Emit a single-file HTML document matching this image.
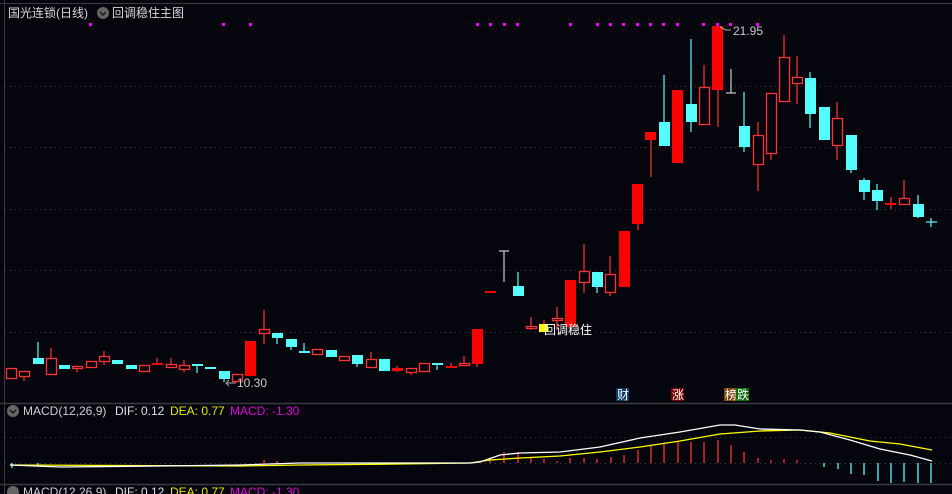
<!DOCTYPE html>
<html><head><meta charset="utf-8"><style>
html,body{margin:0;padding:0;background:#05050d;width:952px;height:494px;overflow:hidden}
svg{display:block}
text{font-family:"Liberation Sans","Noto Sans CJK SC",sans-serif;font-size:12px}
</style></head><body>
<svg width="952" height="494" viewBox="0 0 952 494" xmlns="http://www.w3.org/2000/svg">
<rect width="952" height="494" fill="#05050d"/>
<line x1="0" y1="3.5" x2="952" y2="3.5" stroke="#3a3a40"/>
<line x1="4.5" y1="0" x2="4.5" y2="494" stroke="#3a3a40"/>
<g stroke="#3a3a3a" stroke-dasharray="1,4">
<line x1="5" y1="86.5" x2="952" y2="86.5"/><line x1="5" y1="147.5" x2="952" y2="147.5"/>
<line x1="5" y1="209.5" x2="952" y2="209.5"/><line x1="5" y1="270.5" x2="952" y2="270.5"/>
<line x1="5" y1="332.5" x2="952" y2="332.5"/>
<line x1="5" y1="437.5" x2="952" y2="437.5"/><line x1="5" y1="463.5" x2="952" y2="463.5"/>
</g>
<line x1="0" y1="403.5" x2="952" y2="403.5" stroke="#3a3a40" stroke-width="1.5"/>
<line x1="0" y1="484.5" x2="952" y2="484.5" stroke="#3a3a40" stroke-width="1.5"/>
<text x="8" y="17" fill="#d8d8d8">国光连锁(日线)</text>
<circle cx="103" cy="13" r="6" fill="#666"/><path d="M100 12l3 3 3-3" stroke="#111" fill="none" stroke-width="1.3"/>
<text x="112" y="17" fill="#d8d8d8">回调稳住主图</text>
<g fill="#ff00ff">
<rect x="89" y="23" width="3" height="3"/><rect x="222" y="23" width="3" height="3"/><rect x="249" y="23" width="3" height="3"/>
<rect x="476" y="23" width="3" height="3"/><rect x="489" y="23" width="3" height="3"/><rect x="503" y="23" width="3" height="3"/><rect x="516" y="23" width="3" height="3"/>
<rect x="569" y="23" width="3" height="3"/><rect x="596" y="23" width="3" height="3"/><rect x="609" y="23" width="3" height="3"/><rect x="622" y="23" width="3" height="3"/>
<rect x="636" y="23" width="3" height="3"/><rect x="649" y="23" width="3" height="3"/><rect x="662" y="23" width="3" height="3"/><rect x="676" y="23" width="3" height="3"/>
<rect x="702" y="23" width="3" height="3"/><rect x="716" y="23" width="3" height="3"/><rect x="729" y="23" width="3" height="3"/><rect x="756" y="23" width="3" height="3"/>
</g>
<!-- wicks -->
<g stroke-width="1.2">
<g stroke="#ff3333">
<line x1="24" y1="371" x2="24" y2="381"/><line x1="51" y1="348" x2="51" y2="374"/><line x1="77" y1="366" x2="77" y2="372"/>
<line x1="104" y1="351" x2="104" y2="365"/><line x1="157" y1="358" x2="157" y2="365"/><line x1="171" y1="358" x2="171" y2="367"/>
<line x1="184" y1="360" x2="184" y2="372"/><line x1="264" y1="310" x2="264" y2="344"/><line x1="371" y1="352" x2="371" y2="367"/>
<line x1="397" y1="366" x2="397" y2="372"/><line x1="411" y1="368" x2="411" y2="375"/><line x1="451" y1="363" x2="451" y2="367"/>
<line x1="464" y1="356" x2="464" y2="365"/><line x1="477" y1="329" x2="477" y2="367"/><line x1="531" y1="317" x2="531" y2="330"/>
<line x1="544" y1="320" x2="544" y2="326"/><line x1="557" y1="307" x2="557" y2="330"/><line x1="584" y1="244" x2="584" y2="293"/>
<line x1="610" y1="256" x2="610" y2="296"/><line x1="638" y1="184" x2="638" y2="230"/><line x1="651" y1="132" x2="651" y2="177"/>
<line x1="704" y1="65" x2="704" y2="124"/><line x1="718" y1="26" x2="718" y2="127"/><line x1="758" y1="122" x2="758" y2="191"/>
<line x1="771" y1="93" x2="771" y2="160"/><line x1="784" y1="35" x2="784" y2="101"/><line x1="797" y1="56" x2="797" y2="104"/>
<line x1="837" y1="102" x2="837" y2="160"/><line x1="891" y1="197" x2="891" y2="209"/><line x1="904" y1="180" x2="904" y2="204"/>
</g>
<g stroke="#55ffff">
<line x1="38" y1="342" x2="38" y2="364"/><line x1="197" y1="365" x2="197" y2="373"/><line x1="224" y1="371" x2="224" y2="382"/>
<line x1="277" y1="333" x2="277" y2="344"/><line x1="291" y1="339" x2="291" y2="350"/><line x1="304" y1="343" x2="304" y2="353"/>
<line x1="357" y1="355" x2="357" y2="367"/><line x1="437" y1="363" x2="437" y2="370"/><line x1="518" y1="272" x2="518" y2="296"/>
<line x1="597" y1="272" x2="597" y2="293"/><line x1="664" y1="75" x2="664" y2="146"/><line x1="691" y1="39" x2="691" y2="132"/>
<line x1="744" y1="92" x2="744" y2="152"/><line x1="810" y1="72" x2="810" y2="128"/><line x1="851" y1="135" x2="851" y2="173"/>
<line x1="864" y1="178" x2="864" y2="200"/><line x1="877" y1="184" x2="877" y2="210"/><line x1="918" y1="195" x2="918" y2="218"/>
<line x1="931" y1="218" x2="931" y2="227"/><line x1="926" y1="222" x2="937" y2="222"/>
</g>
<g stroke="#cccccc">
<line x1="504" y1="251" x2="504" y2="282"/><line x1="499" y1="251" x2="509" y2="251"/>
<line x1="731" y1="69" x2="731" y2="93"/><line x1="726" y1="93" x2="736" y2="93"/>
</g>
</g>
<!-- hollow red -->
<g fill="#05050d" stroke="#ff3333" stroke-width="1.3">
<rect x="6.5" y="368.5" width="10" height="10"/><rect x="19.5" y="371.5" width="10" height="5"/><rect x="46.5" y="358.5" width="10" height="16"/>
<rect x="72.5" y="366.5" width="10" height="2"/><rect x="86.5" y="361.5" width="10" height="6"/><rect x="99.5" y="356.5" width="10" height="5"/>
<rect x="139.5" y="365.5" width="10" height="6"/><rect x="166.5" y="364.5" width="10" height="3"/><rect x="179.5" y="365.5" width="10" height="4"/>
<rect x="232.5" y="374.5" width="10" height="7"/><rect x="259.5" y="329.5" width="10" height="4"/><rect x="312.5" y="349.5" width="10" height="5"/>
<rect x="339.5" y="356.5" width="10" height="4"/><rect x="366.5" y="359.5" width="10" height="8"/><rect x="406.5" y="368.5" width="10" height="4"/>
<rect x="419.5" y="363.5" width="10" height="8"/><rect x="459.5" y="363.5" width="10" height="2"/><rect x="526.5" y="326.5" width="10" height="2"/>
<rect x="552.5" y="318.5" width="10" height="2"/><rect x="579.5" y="271.5" width="10" height="11"/><rect x="605.5" y="274.5" width="10" height="18"/>
<rect x="699.5" y="87.5" width="10" height="37"/><rect x="753.5" y="135.5" width="10" height="29"/><rect x="766.5" y="93.5" width="10" height="60"/>
<rect x="779.5" y="57.5" width="10" height="44"/><rect x="792.5" y="77.5" width="10" height="6"/><rect x="832.5" y="118.5" width="10" height="27"/>
<rect x="899.5" y="198.5" width="10" height="6"/>
</g>
<!-- filled red -->
<g fill="#ff0000">
<rect x="392" y="368" width="11" height="3"/><rect x="446" y="366" width="11" height="2"/><rect x="472" y="329" width="11" height="35"/>
<rect x="485" y="291" width="11" height="2"/><rect x="245" y="341" width="11" height="35"/><rect x="152" y="363" width="11" height="2"/>
<rect x="565" y="280" width="11" height="47"/><rect x="619" y="231" width="11" height="56"/><rect x="632" y="184" width="11" height="40"/>
<rect x="645" y="132" width="11" height="8"/><rect x="672" y="90" width="11" height="73"/><rect x="712" y="26" width="11" height="64"/>
<rect x="885" y="203" width="11" height="2"/>
</g>
<rect x="539" y="324" width="9" height="8" fill="#ffff00"/>
<!-- cyan filled -->
<g fill="#55ffff">
<rect x="33" y="358" width="11" height="6"/><rect x="59" y="365" width="11" height="4"/><rect x="112" y="360" width="11" height="4"/>
<rect x="126" y="365" width="11" height="4"/><rect x="192" y="364" width="11" height="2"/><rect x="205" y="367" width="11" height="2"/>
<rect x="219" y="371" width="11" height="8"/><rect x="272" y="333" width="11" height="5"/><rect x="286" y="339" width="11" height="8"/>
<rect x="299" y="351" width="11" height="2"/><rect x="326" y="350" width="11" height="7"/><rect x="352" y="355" width="11" height="9"/>
<rect x="379" y="359" width="11" height="12"/><rect x="432" y="363" width="11" height="2"/><rect x="513" y="286" width="11" height="10"/>
<rect x="592" y="272" width="11" height="15"/><rect x="659" y="122" width="11" height="24"/><rect x="686" y="104" width="11" height="18"/>
<rect x="739" y="126" width="11" height="21"/><rect x="805" y="78" width="11" height="36"/><rect x="819" y="107" width="11" height="33"/>
<rect x="846" y="135" width="11" height="35"/><rect x="859" y="180" width="11" height="12"/><rect x="872" y="190" width="11" height="11"/>
<rect x="913" y="204" width="11" height="13"/>
</g>
<text x="544" y="334" fill="#ffffff">回调稳住</text>
<path d="M236 383h-10m3-3l-3 3 3 3" stroke="#aaa" fill="none"/>
<text x="237" y="387" fill="#c8c8c8">10.30</text>
<path d="M720 27l6 3h5" stroke="#aaa" fill="none"/>
<text x="733" y="35" fill="#c8c8c8">21.95</text>
<rect x="616" y="388" width="13" height="13" fill="#0a3a66"/><text x="617" y="399" fill="#fff">财</text>
<rect x="671" y="388" width="13" height="13" fill="#7a0000"/><text x="672" y="399" fill="#fff">涨</text>
<rect x="724" y="388" width="13" height="13" fill="#7a4a10"/><text x="725" y="399" fill="#fff">榜</text>
<rect x="736" y="388" width="13" height="13" fill="#0a6a0a"/><text x="737" y="399" fill="#fff">跌</text>
<!-- MACD header -->
<circle cx="13" cy="411" r="6" fill="#666"/><path d="M10 410l3 3 3-3" stroke="#111" fill="none" stroke-width="1.3"/>
<text x="23" y="415" fill="#d0d0d0">MACD(12,26,9)</text><text x="115" y="415" fill="#e0e0e0">DIF: 0.12</text>
<text x="170" y="415" fill="#e6e600">DEA: 0.77</text><text x="230" y="415" fill="#e000e0">MACD: -1.30</text>
<circle cx="13" cy="492" r="6" fill="#666"/>
<text x="23" y="496" fill="#d0d0d0">MACD(12,26,9)</text><text x="115" y="496" fill="#e0e0e0">DIF: 0.12</text>
<text x="170" y="496" fill="#e6e600">DEA: 0.77</text><text x="230" y="496" fill="#e000e0">MACD: -1.30</text>
<!-- MACD bars -->
<g stroke-width="1.3">
<g stroke="#ff3333">
<line x1="264" y1="463" x2="264" y2="460"/><line x1="277" y1="463" x2="277" y2="461"/><line x1="490" y1="463" x2="490" y2="459"/>
<line x1="504" y1="463" x2="504" y2="452"/><line x1="518" y1="463" x2="518" y2="452"/><line x1="531" y1="463" x2="531" y2="458"/>
<line x1="544" y1="463" x2="544" y2="459"/><line x1="557" y1="463" x2="557" y2="461"/><line x1="570" y1="463" x2="570" y2="458"/>
<line x1="584" y1="463" x2="584" y2="458"/><line x1="597" y1="463" x2="597" y2="459"/><line x1="611" y1="463" x2="611" y2="457"/>
<line x1="624" y1="463" x2="624" y2="455"/><line x1="638" y1="463" x2="638" y2="450"/><line x1="651" y1="463" x2="651" y2="445"/>
<line x1="664" y1="463" x2="664" y2="444"/><line x1="678" y1="463" x2="678" y2="441"/><line x1="691" y1="463" x2="691" y2="442"/>
<line x1="704" y1="463" x2="704" y2="442"/><line x1="718" y1="463" x2="718" y2="440"/><line x1="731" y1="463" x2="731" y2="445"/>
<line x1="744" y1="463" x2="744" y2="452"/><line x1="758" y1="463" x2="758" y2="458"/><line x1="771" y1="463" x2="771" y2="460"/>
<line x1="784" y1="463" x2="784" y2="459"/><line x1="797" y1="463" x2="797" y2="460"/>
</g>
<g stroke="#55ffff">
<line x1="38" y1="463" x2="38" y2="466"/><line x1="12" y1="463" x2="12" y2="468"/><line x1="824" y1="463" x2="824" y2="467"/><line x1="838" y1="463" x2="838" y2="469"/>
<line x1="851" y1="463" x2="851" y2="474"/><line x1="864" y1="463" x2="864" y2="475"/><line x1="878" y1="463" x2="878" y2="481"/>
<line x1="891" y1="463" x2="891" y2="483"/><line x1="904" y1="463" x2="904" y2="482"/><line x1="918" y1="463" x2="918" y2="483"/>
<line x1="931" y1="463" x2="931" y2="483"/>
</g>
</g>
<polyline fill="none" stroke="#ffff00" stroke-width="1.3" points="10,465 240,466 300,465 400,464 470,463 490,460 520,458 560,456 600,452 640,447 680,441 720,434 760,431 800,430 830,433 870,441 900,444 932,450"/>
<polyline fill="none" stroke="#ffffff" stroke-width="1.3" points="10,465 60,467 160,466 240,465 300,463 400,463 470,463 480,462 500,455 520,453 560,452 600,447 640,438 680,432 720,425 735,425 760,429 800,430 820,432 850,440 880,449 910,455 932,461"/>
</svg>
</body></html>
